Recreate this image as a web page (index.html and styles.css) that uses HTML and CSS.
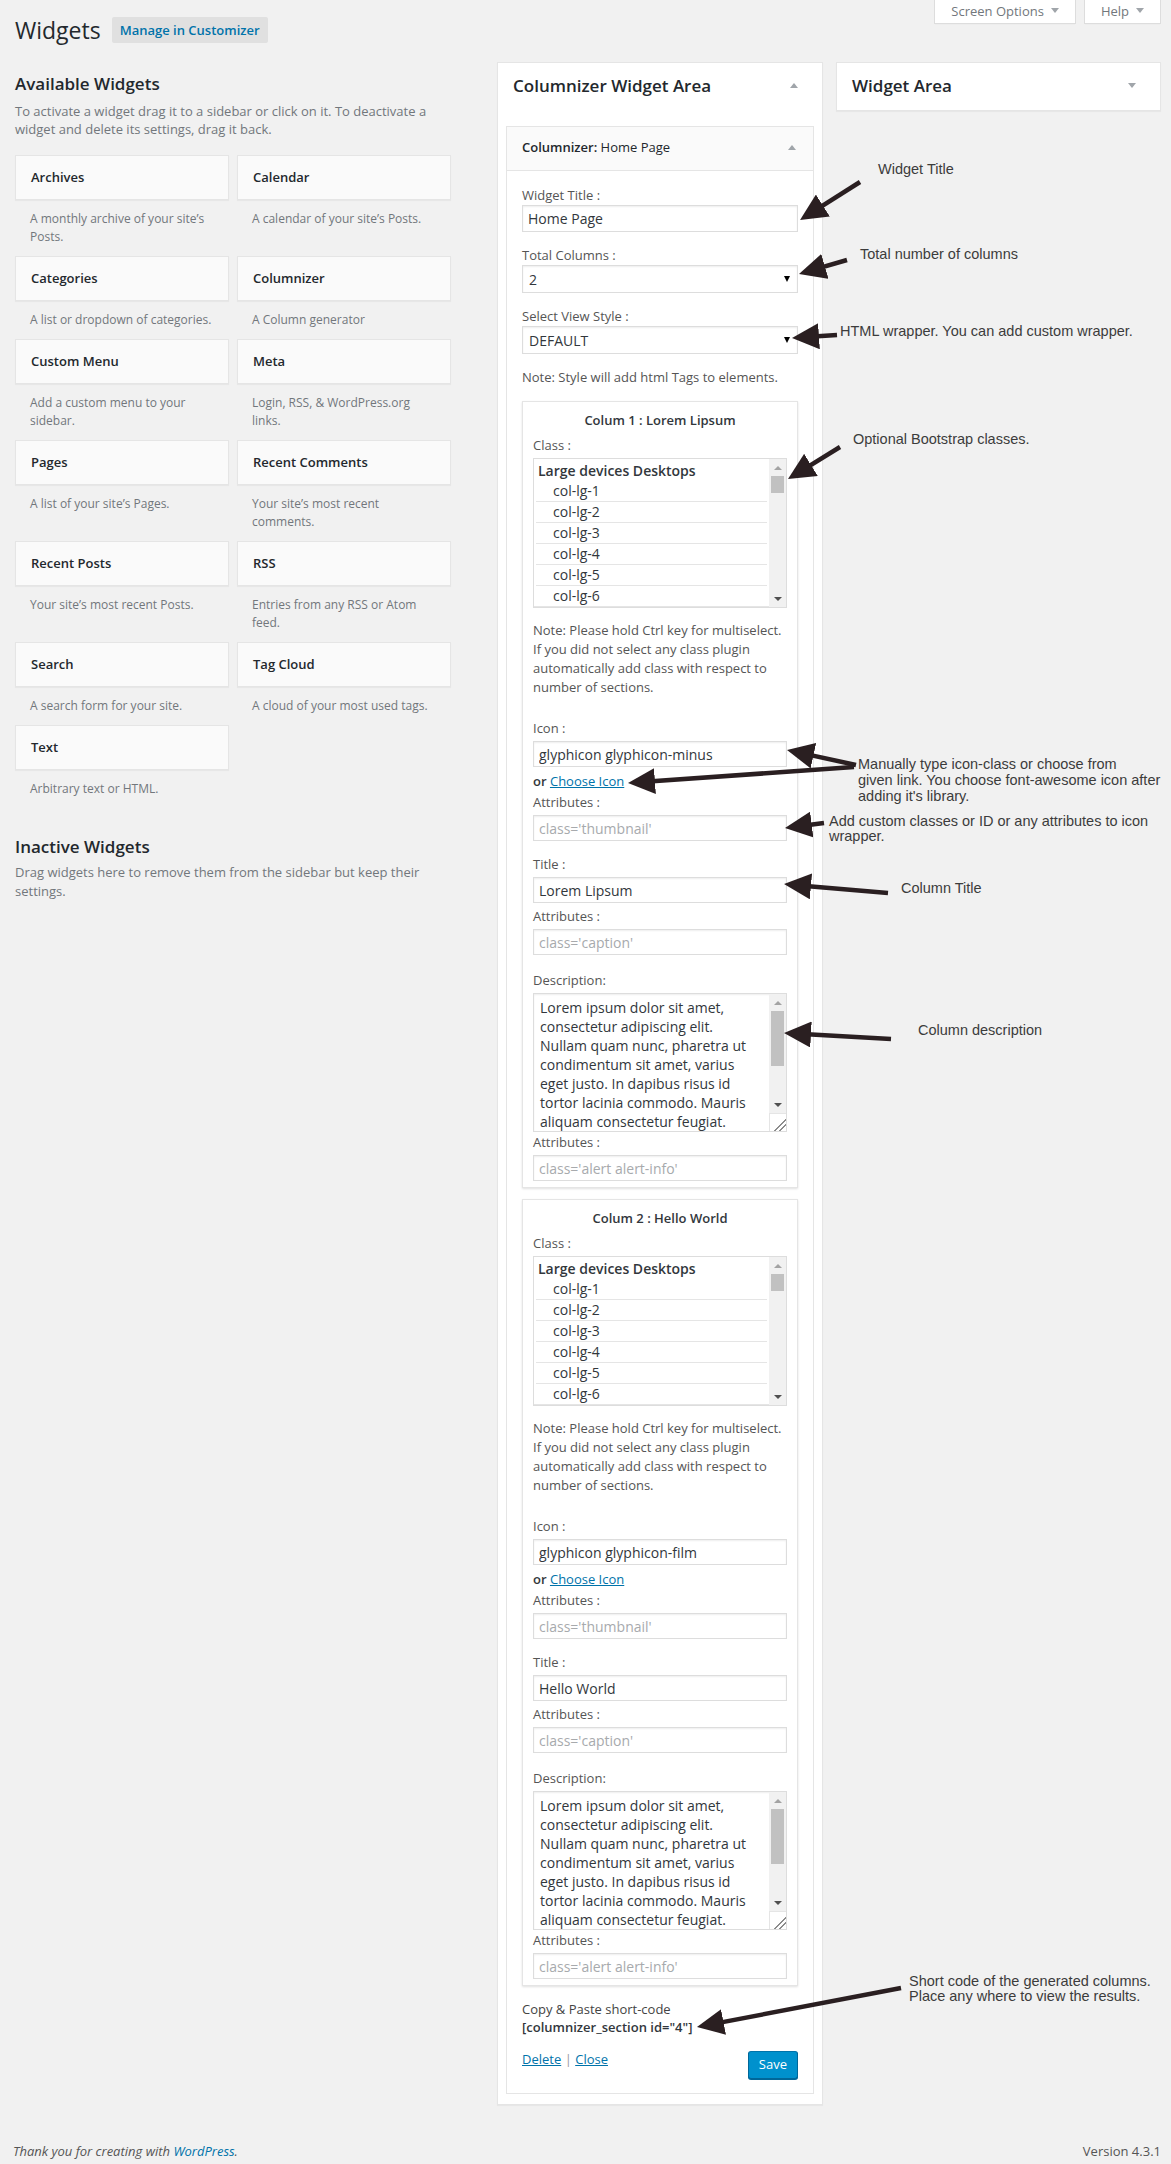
FILE: index.html
```html
<!DOCTYPE html>
<html lang="en">
<head>
    <meta charset="UTF-8">
    <meta name="viewport" content="width=device-width, initial-scale=1.0">
    <title>Widgets &lsaquo; WordPress</title>
    <link rel="stylesheet" href="styles.css">
</head>
<body>
<div id="screen-meta-links">
    <button class="meta-toggle">Screen Options <span class="caret"></span></button>
    <button class="meta-toggle">Help <span class="caret"></span></button>
</div>

<div class="wrap">
    <div class="title-row">
        <h1>Widgets</h1>
        <a href="#" class="title-action">Manage in Customizer</a>
    </div>

    <div class="widgets-cols">
        <!-- available + inactive widgets -->
        <div class="widgets-left">
            <h2 class="area-title">Available Widgets</h2>
            <p class="area-desc">To activate a widget drag it to a sidebar or click on it. To deactivate a widget and delete its settings, drag it back.</p>

            <div class="widget-list">
                <div class="avail"><div class="avail-top">Archives</div><p class="avail-desc">A monthly archive of your site&rsquo;s Posts.</p></div>
                <div class="avail"><div class="avail-top">Calendar</div><p class="avail-desc">A calendar of your site&rsquo;s Posts.</p></div>
                <div class="avail"><div class="avail-top">Categories</div><p class="avail-desc">A list or dropdown of categories.</p></div>
                <div class="avail"><div class="avail-top">Columnizer</div><p class="avail-desc">A Column generator</p></div>
                <div class="avail"><div class="avail-top">Custom Menu</div><p class="avail-desc">Add a custom menu to your sidebar.</p></div>
                <div class="avail"><div class="avail-top">Meta</div><p class="avail-desc">Login, RSS, &amp; WordPress.org links.</p></div>
                <div class="avail"><div class="avail-top">Pages</div><p class="avail-desc">A list of your site&rsquo;s Pages.</p></div>
                <div class="avail"><div class="avail-top">Recent Comments</div><p class="avail-desc">Your site&rsquo;s most recent comments.</p></div>
                <div class="avail"><div class="avail-top">Recent Posts</div><p class="avail-desc">Your site&rsquo;s most recent Posts.</p></div>
                <div class="avail"><div class="avail-top">RSS</div><p class="avail-desc">Entries from any RSS or Atom feed.</p></div>
                <div class="avail"><div class="avail-top">Search</div><p class="avail-desc">A search form for your site.</p></div>
                <div class="avail"><div class="avail-top">Tag Cloud</div><p class="avail-desc">A cloud of your most used tags.</p></div>
                <div class="avail"><div class="avail-top">Text</div><p class="avail-desc">Arbitrary text or HTML.</p></div>
            </div>

            <h2 class="area-title inactive-title">Inactive Widgets</h2>
            <p class="area-desc inactive-desc">Drag widgets here to remove them from the sidebar but keep their settings.</p>
        </div>

        <!-- registered sidebars -->
        <div class="widgets-right">
            <div class="sidebar">
                <div class="sidebar-name">
                    <h2>Columnizer Widget Area</h2>
                    <span class="tri-up"></span>
                </div>
                <div class="sidebar-body">
                    <div class="widget">
                        <div class="widget-head">
                            <h3><b>Columnizer:</b> Home Page</h3>
                            <span class="tri-up"></span>
                        </div>
                        <div class="widget-inside">
                            <div class="top-field">
                                <label>Widget Title :</label>
                                <input class="txt big" type="text" value="Home Page">
                            </div>
                            <div class="top-field">
                                <label>Total Columns :</label>
                                <div class="select-box">
                                    <select><option>2</option></select>
                                </div>
                            </div>
                            <div class="top-field">
                                <label>Select View Style :</label>
                                <div class="select-box">
                                    <select><option>DEFAULT</option></select>
                                </div>
                            </div>
                            <p class="style-note">Note: Style will add html Tags to elements.</p>

                            <!-- column 1 -->
                            <div class="col-box">
                                <h4 class="col-title">Colum 1 : Lorem Lipsum</h4>
                                <label class="lbl">Class :</label>
                                <div class="listbox">
                                    <div class="list-rows">
                                        <div class="grp">Large devices Desktops</div>
                                        <div class="opt">col-lg-1</div>
                                        <div class="opt">col-lg-2</div>
                                        <div class="opt">col-lg-3</div>
                                        <div class="opt">col-lg-4</div>
                                        <div class="opt">col-lg-5</div>
                                        <div class="opt">col-lg-6</div>
                                    </div>
                                    <div class="vscroll">
                                        <span class="sb-btn"><span class="sb-up"></span></span>
                                        <span class="sb-thumb"></span>
                                        <span class="sb-space"></span>
                                        <span class="sb-btn"><span class="sb-down"></span></span>
                                    </div>
                                </div>
                                <p class="col-note">Note: Please hold Ctrl key for multiselect.<br>If you did not select any class plugin automatically add class with respect to number of sections.</p>

                                <label class="lbl icon-lbl">Icon :</label>
                                <input class="txt" type="text" value="glyphicon glyphicon-minus">
                                <p class="choose">or <a href="#">Choose Icon</a></p>
                                <label class="lbl after-link">Attributes :</label>
                                <input class="txt" type="text" placeholder="class='thumbnail'">

                                <label class="lbl gap-l">Title :</label>
                                <input class="txt" type="text" value="Lorem Lipsum">
                                <label class="lbl gap-s">Attributes :</label>
                                <input class="txt" type="text" placeholder="class='caption'">

                                <label class="lbl gap-d">Description:</label>
                                <div class="textarea">
                                    <div class="ta-text">Lorem ipsum dolor sit amet,<br>consectetur adipiscing elit.<br>Nullam quam nunc, pharetra ut<br>condimentum sit amet, varius<br>eget justo. In dapibus risus id<br>tortor lacinia commodo. Mauris<br>aliquam consectetur feugiat.</div>
                                    <div class="vscroll">
                                        <span class="sb-btn"><span class="sb-up"></span></span>
                                        <span class="sb-thumb long"></span>
                                        <span class="sb-space"></span>
                                        <span class="sb-btn"><span class="sb-down"></span></span>
                                        <span class="grip"></span>
                                    </div>
                                </div>
                                <label class="lbl gap-t">Attributes :</label>
                                <input class="txt" type="text" placeholder="class='alert alert-info'">
                            </div>

                            <!-- column 2 -->
                            <div class="col-box">
                                <h4 class="col-title">Colum 2 : Hello World</h4>
                                <label class="lbl">Class :</label>
                                <div class="listbox">
                                    <div class="list-rows">
                                        <div class="grp">Large devices Desktops</div>
                                        <div class="opt">col-lg-1</div>
                                        <div class="opt">col-lg-2</div>
                                        <div class="opt">col-lg-3</div>
                                        <div class="opt">col-lg-4</div>
                                        <div class="opt">col-lg-5</div>
                                        <div class="opt">col-lg-6</div>
                                    </div>
                                    <div class="vscroll">
                                        <span class="sb-btn"><span class="sb-up"></span></span>
                                        <span class="sb-thumb"></span>
                                        <span class="sb-space"></span>
                                        <span class="sb-btn"><span class="sb-down"></span></span>
                                    </div>
                                </div>
                                <p class="col-note">Note: Please hold Ctrl key for multiselect.<br>If you did not select any class plugin automatically add class with respect to number of sections.</p>

                                <label class="lbl icon-lbl">Icon :</label>
                                <input class="txt" type="text" value="glyphicon glyphicon-film">
                                <p class="choose">or <a href="#">Choose Icon</a></p>
                                <label class="lbl after-link">Attributes :</label>
                                <input class="txt" type="text" placeholder="class='thumbnail'">

                                <label class="lbl gap-l">Title :</label>
                                <input class="txt" type="text" value="Hello World">
                                <label class="lbl gap-s">Attributes :</label>
                                <input class="txt" type="text" placeholder="class='caption'">

                                <label class="lbl gap-d">Description:</label>
                                <div class="textarea">
                                    <div class="ta-text">Lorem ipsum dolor sit amet,<br>consectetur adipiscing elit.<br>Nullam quam nunc, pharetra ut<br>condimentum sit amet, varius<br>eget justo. In dapibus risus id<br>tortor lacinia commodo. Mauris<br>aliquam consectetur feugiat.</div>
                                    <div class="vscroll">
                                        <span class="sb-btn"><span class="sb-up"></span></span>
                                        <span class="sb-thumb long"></span>
                                        <span class="sb-space"></span>
                                        <span class="sb-btn"><span class="sb-down"></span></span>
                                        <span class="grip"></span>
                                    </div>
                                </div>
                                <label class="lbl gap-t">Attributes :</label>
                                <input class="txt" type="text" placeholder="class='alert alert-info'">
                            </div>

                            <p class="shortcode">Copy &amp; Paste short-code<br><b>[columnizer_section id="4"]</b></p>

                            <div class="widget-control">
                                <div class="control-links"><a href="#">Delete</a> <span class="sep">|</span> <a href="#">Close</a></div>
                                <button class="btn-save">Save</button>
                            </div>
                        </div>
                    </div>
                </div>
            </div>

            <div class="sidebar closed">
                <div class="sidebar-name">
                    <h2>Widget Area</h2>
                    <span class="tri-down"></span>
                </div>
            </div>
        </div>
    </div>
</div>

<div class="footer">
    <p class="thanks">Thank you for creating with <a href="#">WordPress</a>.</p>
    <p class="version">Version 4.3.1</p>
</div>

<!-- help callouts drawn over the screen -->
<div class="notes">
    <svg class="arrows" width="1171" height="2164" viewBox="0 0 1171 2164">
        <defs>
            <marker id="head" markerUnits="userSpaceOnUse" markerWidth="27" markerHeight="26" viewBox="0 0 27 26" refX="17" refY="13" orient="auto">
                <path d="M0,0 L27,13 L0,26 Z" fill="#2a1f21"/>
            </marker>
        </defs>
        <g stroke="#2a1f21" stroke-width="4.5" fill="none">
            <line x1="860" y1="182" x2="808.5" y2="214.6" marker-end="url(#head)"/>
            <line x1="847" y1="260" x2="808.6" y2="271.2" marker-end="url(#head)"/>
            <line x1="837" y1="335" x2="802" y2="337.3" marker-end="url(#head)"/>
            <line x1="840" y1="447" x2="796.5" y2="473.8" marker-end="url(#head)"/>
            <line x1="856" y1="765" x2="796.8" y2="752.1" marker-end="url(#head)"/>
            <line x1="854" y1="767" x2="638" y2="782.3" marker-end="url(#head)"/>
            <line x1="824" y1="823" x2="794.9" y2="826.7" marker-end="url(#head)"/>
            <line x1="888" y1="893" x2="794" y2="884.9" marker-end="url(#head)"/>
            <line x1="891" y1="1039" x2="794" y2="1033.6" marker-end="url(#head)"/>
            <line x1="901" y1="1988" x2="706.8" y2="2025.1" marker-end="url(#head)"/>
        </g>
    </svg>
    <div class="note n1">Widget Title</div>
    <div class="note n2">Total number of columns</div>
    <div class="note n3">HTML wrapper. You can add custom wrapper.</div>
    <div class="note n4">Optional Bootstrap classes.</div>
    <div class="note n5">Manually type icon-class or choose from<br>given link. You choose font-awesome icon after<br>adding it's library.</div>
    <div class="note n6">Add custom classes or ID or any attributes to icon<br>wrapper.</div>
    <div class="note n7">Column Title</div>
    <div class="note n8">Column description</div>
    <div class="note n9">Short code of the generated columns.<br>Place any where to view the results.</div>
</div>
</body>
</html>
```

FILE: styles.css
```css
* {
    box-sizing: border-box;
}
body {
    margin: 0;
    position: relative;
    background: #f1f1f1;
    color: #444;
    font-family: "Open Sans", "Liberation Sans", sans-serif;
    font-size: 13px;
    line-height: 1.4;
}
a {
    color: #0073aa;
}
p {
    margin: 0;
}

/* screen options / help tabs */
#screen-meta-links {
    float: right;
    display: flex;
    gap: 8px;
    margin-right: 10px;
}
.meta-toggle {
    display: flex;
    align-items: center;
    gap: 7px;
    height: 24px;
    padding: 0 16px 2px;
    background: #fff;
    border: 1px solid #ddd;
    border-top: none;
    box-shadow: 0 1px 1px -1px rgba(0, 0, 0, 0.1);
    color: #72777c;
    font-family: inherit;
    font-size: 13px;
}
.caret {
    width: 0;
    height: 0;
    border-left: 4px solid transparent;
    border-right: 4px solid transparent;
    border-top: 5px solid #a0a5aa;
}

/* page title */
.wrap {
    padding: 0 10px 0 15px;
}
.title-row {
    display: flex;
    align-items: center;
    padding-top: 15px;
}
.title-row h1 {
    margin: 0;
    font-size: 23px;
    font-weight: 400;
    line-height: 30px;
    color: #23282d;
}
.title-action {
    margin-left: 11px;
    padding: 4px 8px;
    background: #e0e0e0;
    border-radius: 2px;
    color: #0073aa;
    font-weight: 600;
    line-height: 18px;
    text-decoration: none;
}

.widgets-cols {
    display: flex;
    align-items: flex-start;
    margin-top: 17px;
}

/* left column */
.widgets-left {
    width: 436px;
    margin-right: 46px;
}
.area-title {
    margin: 12px 0 0;
    font-size: 17px;
    font-weight: 600;
    line-height: 20px;
    color: #23282d;
}
.area-desc {
    margin-top: 8px;
    line-height: 18px;
    color: #72777c;
}
.widget-list {
    display: grid;
    grid-template-columns: 214px 214px;
    column-gap: 8px;
    margin-top: 17px;
}
.avail-top {
    height: 45px;
    padding: 0 15px;
    background: #fafafa;
    border: 1px solid #e5e5e5;
    box-shadow: 0 1px 1px rgba(0, 0, 0, 0.04);
    color: #23282d;
    font-weight: 600;
    line-height: 42px;
}
.avail-desc {
    padding: 10px 15px;
    font-size: 12px;
    line-height: 18px;
    color: #72777c;
}
.inactive-title {
    margin-top: 29px;
}
.inactive-desc {
    margin-top: 6px;
    line-height: 19px;
}

/* sidebars */
.widgets-right {
    display: flex;
    align-items: flex-start;
    gap: 13px;
}
.sidebar {
    width: 326px;
    background: #fff;
    border: 1px solid #e5e5e5;
    box-shadow: 0 1px 1px rgba(0, 0, 0, 0.04);
}
.sidebar.closed {
    width: 325px;
}
.sidebar-name {
    display: flex;
    justify-content: space-between;
    align-items: center;
    padding: 12px 24px 14px 15px;
}
.sidebar-name h2 {
    margin: 0;
    font-size: 17px;
    font-weight: 600;
    line-height: 21px;
    color: #23282d;
}
.tri-up, .tri-down {
    width: 0;
    height: 0;
    border-left: 4px solid transparent;
    border-right: 4px solid transparent;
}
.tri-up {
    border-bottom: 5px solid #a0a5aa;
}
.tri-down {
    border-top: 5px solid #a0a5aa;
}
.sidebar-body {
    padding: 16px 8px 10px;
}

/* open widget */
.widget {
    border: 1px solid #e5e5e5;
    background: #fff;
}
.widget-head {
    display: flex;
    justify-content: space-between;
    align-items: center;
    padding: 11px 17px 13px 15px;
    background: #fafafa;
    border-bottom: 1px solid #e5e5e5;
}
.widget-head h3 {
    margin: 0;
    font-size: 13px;
    font-weight: 400;
    line-height: 19px;
    color: #23282d;
}
.widget-head b {
    font-weight: 600;
}
.widget-inside {
    padding: 15px 15px 14px;
}
.top-field {
    margin-bottom: 14px;
}
.top-field label, .lbl {
    display: block;
    line-height: 19px;
    color: #555;
}
.style-note {
    line-height: 19px;
    color: #555;
    margin-bottom: 14px;
}

.txt {
    display: block;
    width: 100%;
    height: 26px;
    margin: 0;
    padding: 0 5px;
    border: 1px solid #ddd;
    box-shadow: inset 0 1px 2px rgba(0, 0, 0, 0.07);
    background: #fff;
    color: #32373c;
    font-family: inherit;
    font-size: 14px;
    outline: none;
}
.txt.big {
    height: 27px;
}
.txt::placeholder {
    color: #a7aaad;
}
.select-box {
    position: relative;
}
.select-box select {
    display: block;
    width: 100%;
    height: 28px;
    padding: 0 6px;
    -webkit-appearance: none;
    appearance: none;
    border: 1px solid #ddd;
    border-radius: 0;
    box-shadow: inset 0 1px 2px rgba(0, 0, 0, 0.07);
    background: #fff;
    color: #32373c;
    font-family: inherit;
    font-size: 14px;
}
.select-box::after {
    content: "";
    position: absolute;
    right: 8px;
    top: 11px;
    border-left: 3px solid transparent;
    border-right: 3px solid transparent;
    border-top: 6px solid #000;
}

/* column boxes */
.col-box {
    padding: 9px 10px 6px;
    margin-bottom: 11px;
    border: 1px solid #e5e5e5;
    box-shadow: 0 1px 2px rgba(0, 0, 0, 0.12);
}
.col-title {
    margin: 0 0 6px;
    text-align: center;
    font-size: 13px;
    font-weight: 600;
    line-height: 19px;
    color: #32373c;
}
.lbl {
    margin-bottom: 3px;
}
.listbox {
    display: flex;
    height: 150px;
    border: 1px solid #ddd;
    background: #fff;
    font-size: 14px;
    color: #32373c;
}
.list-rows {
    flex: 1;
    overflow: hidden;
    padding: 1px 2px 0;
    border-bottom: 1px solid #e5e5e5;
}
.grp {
    height: 21px;
    padding-left: 2px;
    line-height: 21px;
    font-weight: 600;
}
.opt {
    height: 21px;
    padding-left: 17px;
    line-height: 20px;
    border-bottom: 1px solid #e5e5e5;
}
.vscroll {
    display: flex;
    flex-direction: column;
    width: 17px;
    background: #f1f1f1;
}
.sb-btn {
    display: flex;
    justify-content: center;
    align-items: center;
    height: 17px;
    flex: none;
}
.sb-up {
    border-left: 4px solid transparent;
    border-right: 4px solid transparent;
    border-bottom: 4px solid #a3a3a3;
}
.sb-down {
    border-left: 4px solid transparent;
    border-right: 4px solid transparent;
    border-top: 4px solid #505050;
}
.sb-thumb {
    height: 17px;
    margin: 0 2px;
    background: #c1c1c1;
    flex: none;
}
.sb-thumb.long {
    height: 55px;
}
.sb-space {
    flex: 1;
}
.grip {
    height: 18px;
    flex: none;
    background: #fff linear-gradient(135deg, transparent 62%, #8c8c8c 62%, #8c8c8c 67%, transparent 67%, transparent 78%, #8c8c8c 78%, #8c8c8c 83%, transparent 83%);
    border-left: 1px solid #e5e5e5;
    border-top: 1px solid #e5e5e5;
}
.col-note {
    margin-top: 13px;
    line-height: 19px;
    color: #555;
}
.icon-lbl {
    margin-top: 22px;
}
.choose {
    margin-top: 5px;
    line-height: 19px;
    color: #32373c;
    font-weight: 600;
}
.choose a {
    font-weight: 400;
}
.after-link {
    margin-top: 2px;
}
.gap-l {
    margin-top: 14px;
}
.gap-s {
    margin-top: 4px;
}
.gap-d {
    margin-top: 16px;
}
.gap-t {
    margin-top: 1px;
}
.textarea {
    display: flex;
    height: 139px;
    border: 1px solid #ddd;
    box-shadow: inset 0 1px 2px rgba(0, 0, 0, 0.07);
    background: #fff;
}
.ta-text {
    flex: 1;
    overflow: hidden;
    padding: 4px 6px 0;
    font-size: 14px;
    line-height: 19px;
    color: #32373c;
}

/* short code + controls */
.shortcode {
    margin-top: 14px;
    line-height: 18px;
    color: #444;
}
.shortcode b {
    font-weight: 600;
    color: #32373c;
}
.widget-control {
    display: flex;
    justify-content: space-between;
    align-items: flex-start;
    margin-top: 14px;
}
.control-links {
    line-height: 19px;
}
.control-links .sep {
    color: #999;
}
.btn-save {
    height: 28px;
    margin-top: 1px;
    padding: 0 10px 2px;
    background: #0091cd;
    border: 1px solid #0073aa;
    border-color: #0073aa #006799 #006799;
    border-radius: 3px;
    box-shadow: 0 1px 0 #006799;
    color: #fff;
    font-family: inherit;
    font-size: 13px;
}

/* footer */
.footer {
    display: flex;
    justify-content: space-between;
    margin-top: 37px;
    padding: 0 10px 0 13px;
    line-height: 19px;
    color: #555;
}
.thanks {
    font-style: italic;
}
.thanks a {
    text-decoration: none;
}

/* callouts */
.notes {
    position: absolute;
    top: 0;
    left: 0;
    width: 1171px;
    height: 2164px;
    pointer-events: none;
}
.arrows {
    position: absolute;
    top: 0;
    left: 0;
}
.note {
    position: absolute;
    font-family: "Liberation Sans", Arial, sans-serif;
    font-size: 14.5px;
    line-height: 16px;
    color: #3c3c3c;
    white-space: nowrap;
}
.n1 { left: 878px; top: 161px; }
.n2 { left: 860px; top: 246px; }
.n3 { left: 840px; top: 323px; }
.n4 { left: 853px; top: 431px; }
.n5 { left: 858px; top: 756px; }
.n6 { left: 829px; top: 814px; line-height: 15px; }
.n7 { left: 901px; top: 880px; }
.n8 { left: 918px; top: 1022px; }
.n9 { left: 909px; top: 1974px; line-height: 15px; }
```
